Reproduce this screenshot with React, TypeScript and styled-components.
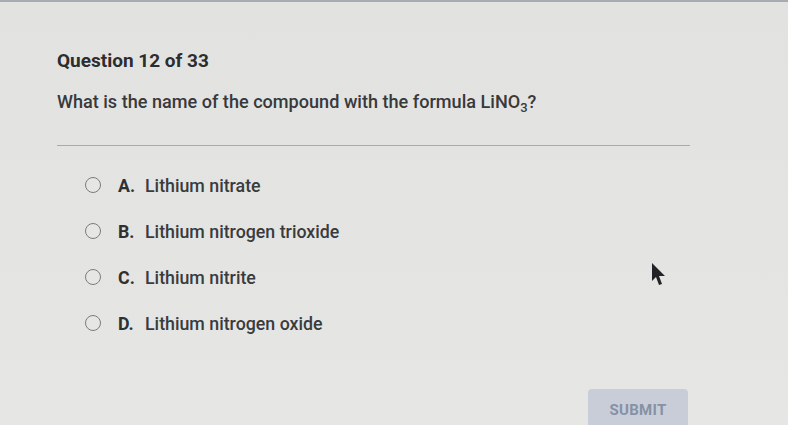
import React from 'react';
import styled, { createGlobalStyle } from 'styled-components';

const GlobalStyle = createGlobalStyle`
    html, body {
        margin: 0;
        padding: 0;
        background: #e3e4e2;
        font-family: Roboto, "Liberation Sans", Arial, sans-serif;
        overflow: hidden;
    }
`;

const Page = styled.div`
    position: relative;
    width: 788px;
    height: 425px;
    border-top: 2px solid #a7acb2;
    box-sizing: border-box;
    background: linear-gradient(180deg, #e2e3e1 0%, #e4e5e3 60%, #e6e7e4 100%);
`;

const Content = styled.div`
    padding: 48px 0 0 57px;
    width: 633px;
`;

const Title = styled.h1`
    margin: 0;
    font-size: 19px;
    font-weight: 700;
    color: #2c2d2f;
    line-height: 22px;
`;

const Prompt = styled.p`
    margin: 19px 0 0;
    font-size: 18.1px;
    font-weight: 500;
    color: #38393b;
    line-height: 22px;
`;

const Sub = styled.sub`
    font-size: 13px;
    vertical-align: -4px;
`;

const Divider = styled.hr`
    margin: 26px 0 0;
    border: 0;
    border-top: 1px solid #a9abab;
    height: 0;
`;

const Options = styled.div`
    display: flex;
    flex-direction: column;
    gap: 24px;
    margin-top: 28px;
    padding-left: 28px;
`;

const Option = styled.label`
    display: flex;
    align-items: center;
    height: 22px;
    font-size: 17.8px;
    font-weight: 500;
    color: #3a3b3d;
`;

const Radio = styled.span`
    width: 14px;
    height: 14px;
    border: 1.8px solid #7a7b7d;
    border-radius: 50%;
    background: #e6e7e5;
    margin-right: 17px;
    flex-shrink: 0;
`;

const Letter = styled.span`
    font-weight: 700;
    color: #2f3032;
    width: 27px;
`;

const Footer = styled.div`
    display: flex;
    justify-content: flex-end;
    padding-right: 100px;
    margin-top: 55px;
`;

const SubmitButton = styled.button`
    width: 100px;
    height: 40px;
    border: 0;
    border-radius: 4px;
    background: #c9cdd7;
    color: #8791a6;
    font-family: Roboto, "Liberation Sans", Arial, sans-serif;
    font-size: 15px;
    font-weight: 700;
    letter-spacing: 0.3px;
    padding: 2px 0 0;
`;

const Cursor = styled.svg`
    position: absolute;
    left: 651px;
    top: 260px;
`;

const options = [
    { letter: 'A.', text: 'Lithium nitrate' },
    { letter: 'B.', text: 'Lithium nitrogen trioxide' },
    { letter: 'C.', text: 'Lithium nitrite' },
    { letter: 'D.', text: 'Lithium nitrogen oxide' },
];

export default function App(): JSX.Element {
    return (
        <Page>
            <GlobalStyle />
            <Content>
                <Title>Question 12 of 33</Title>
                <Prompt>
                    What is the name of the compound with the formula LiNO<Sub>3</Sub>?
                </Prompt>
                <Divider />
                <Options>
                    {options.map((o) => (
                        <Option key={o.letter}>
                            <Radio />
                            <Letter>{o.letter}</Letter>
                            {o.text}
                        </Option>
                    ))}
                </Options>
            </Content>
            <Footer>
                <SubmitButton type='button'>SUBMIT</SubmitButton>
            </Footer>
            <Cursor width='16' height='26' viewBox='0 0 16 26'>
                <path d='M1 1 L1 19 L5 15 L8 23 L11 22 L8 14 L14 14 Z' fill='#222326' />
            </Cursor>
        </Page>
    );
}
